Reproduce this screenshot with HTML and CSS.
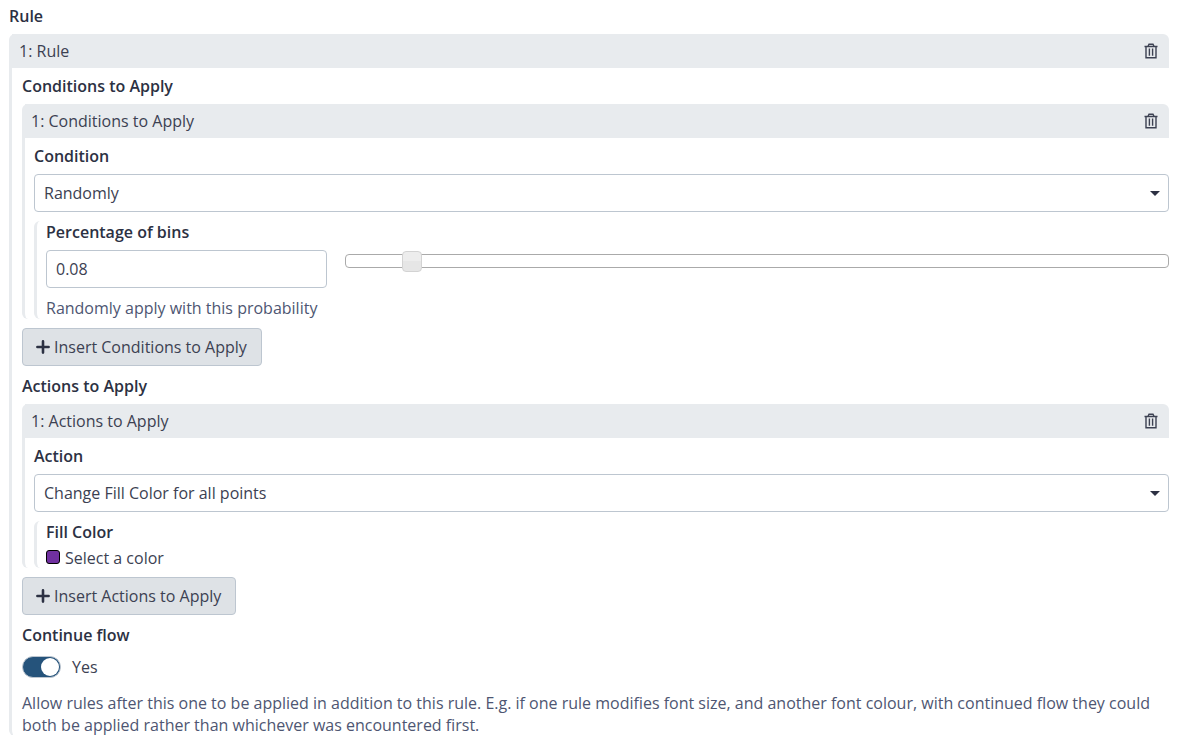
FILE: index.html
```
<!DOCTYPE html>
<html lang="en">
<head>
    <meta charset="UTF-8">
    <meta name="viewport" content="width=device-width, initial-scale=1.0">
    <title>Rule</title>
    <link rel="stylesheet" href="styles.css">
</head>
<body>

<!-- shared icons -->
<svg class="icon-defs" aria-hidden="true">
    <symbol id="icon-trash" viewBox="0 0 14 16">
        <path d="M0.5 3.5H13.5M4 3.2L5 1.2H9L10 3.2M2 3.5V14.8H12V3.5M5.4 5.5V12.8M8.6 5.5V12.8" fill="none" stroke="currentColor" stroke-width="1.4"/>
    </symbol>
    <symbol id="icon-plus" viewBox="0 0 14 14">
        <path d="M7 1.4V12.6M1.4 7H12.6" fill="none" stroke="currentColor" stroke-width="2.6" stroke-linecap="round"/>
    </symbol>
</svg>

<form class="tool-form">
    <h2 class="title">Rule</h2>
    <section class="block">
        <div class="block-header">
            <span>1: Rule</span>
            <button type="button" class="delete" aria-label="Delete rule"><svg><use href="#icon-trash"/></svg></button>
        </div>
        <div class="block-body">

            <!-- conditions -->
            <h3 class="title">Conditions to Apply</h3>
            <section class="block">
                <div class="block-header inner">
                    <span>1: Conditions to Apply</span>
                    <button type="button" class="delete" aria-label="Delete condition"><svg><use href="#icon-trash"/></svg></button>
                </div>
                <div class="block-body">
                    <label class="title" for="condition">Condition</label>
                    <div class="select-wrap">
                        <select id="condition">
                            <option>Randomly</option>
                        </select>
                    </div>
                    <div class="sub-block">
                        <label class="title" for="percentage">Percentage of bins</label>
                        <div class="slider-row">
                            <input type="text" id="percentage" class="number" value="0.08">
                            <div class="slider">
                                <input type="range" min="0" max="1" step="0.01" value="0.08" aria-label="Percentage of bins">
                            </div>
                        </div>
                        <p class="help">Randomly apply with this probability</p>
                    </div>
                </div>
            </section>
            <button type="button" class="insert"><svg><use href="#icon-plus"/></svg>Insert Conditions to Apply</button>

            <!-- actions -->
            <h3 class="title">Actions to Apply</h3>
            <section class="block">
                <div class="block-header inner">
                    <span>1: Actions to Apply</span>
                    <button type="button" class="delete" aria-label="Delete action"><svg><use href="#icon-trash"/></svg></button>
                </div>
                <div class="block-body">
                    <label class="title" for="action">Action</label>
                    <div class="select-wrap">
                        <select id="action">
                            <option>Change Fill Color for all points</option>
                        </select>
                    </div>
                    <div class="sub-block">
                        <h4 class="title">Fill Color</h4>
                        <button type="button" class="color-picker"><span class="swatch"></span>Select a color</button>
                    </div>
                </div>
            </section>
            <button type="button" class="insert"><svg><use href="#icon-plus"/></svg>Insert Actions to Apply</button>

            <!-- continue flow -->
            <h3 class="title">Continue flow</h3>
            <label class="switch">
                <input type="checkbox" checked>
                <span>Yes</span>
            </label>
            <p class="help">Allow rules after this one to be applied in addition to this rule. E.g. if one rule modifies font size, and another font colour, with continued flow they could both be applied rather than whichever was encountered first.</p>
        </div>
    </section>
</form>

</body>
</html>
```

FILE: styles.css
```
* {
    box-sizing: border-box;
}
body {
    margin: 0;
    background: #fff;
    color: #3c4152;
    font-family: "Open Sans", "Noto Sans", sans-serif;
    font-size: 16px;
    line-height: 22px;
}
button, input, select {
    font: inherit;
    color: inherit;
}
.icon-defs {
    display: none;
}
.tool-form {
    padding: 5px 22px 0 9px;
}
.title {
    display: block;
    margin: 0 0 7px;
    color: #2c3143;
    font-size: 16px;
    font-weight: 600;
}

/* repeat blocks */
.block {
    border-left: 3px solid #e8ebee;
    border-radius: 6px;
}
.block-header {
    display: flex;
    align-items: center;
    justify-content: space-between;
    height: 34px;
    padding: 0 11px 0 7px;
    background: #e8ebee;
    border-top-right-radius: 6px;
}
.block-header.inner {
    padding-left: 6px;
}
.block-body {
    padding: 7px 0 0 10px;
}
.block .block .block-body {
    padding-left: 9px;
}
.delete {
    display: flex;
    padding: 0;
    border: none;
    background: none;
    cursor: pointer;
}
.delete svg {
    width: 14px;
    height: 16px;
}
.sub-block {
    margin-top: 9px;
    padding-left: 9px;
    border-left: 3px solid #e8ebee;
    border-radius: 6px;
}

/* controls */
.select-wrap {
    display: grid;
    align-items: center;
}
.select-wrap select, .select-wrap::after {
    grid-area: 1 / 1;
}
.select-wrap::after {
    content: "";
    justify-self: end;
    margin-right: 9px;
    border: 5px solid transparent;
    border-top-color: #2c3143;
    border-bottom: none;
    pointer-events: none;
}
select, .number {
    width: 100%;
    height: 38px;
    padding: 0 9px 1px;
    border: 1px solid #bdc6d0;
    border-radius: 4px;
    background: #fff;
    appearance: none;
}
.slider-row {
    display: flex;
    align-items: flex-start;
    gap: 18px;
}
.number {
    flex: none;
    width: 25%;
}
.slider {
    flex: 1;
    display: flex;
    align-items: center;
    height: 14px;
    margin-top: 4px;
    border: 1px solid #aaa;
    border-radius: 4px;
}
.slider input {
    flex: 1;
    margin: 0 -10px;
    background: none;
    appearance: none;
}
.slider input::-webkit-slider-thumb {
    width: 20px;
    height: 21px;
    border: 1px solid #d3d3d3;
    border-radius: 4px;
    background: linear-gradient(#ededed 50%, #e6e6e6 50%);
    appearance: none;
}
.help {
    margin: 9px 0 0;
    color: #4e5672;
}
.insert {
    display: flex;
    align-items: center;
    gap: 4px;
    height: 38px;
    margin: 9px 0;
    padding: 0 14px 0 13px;
    border: 1px solid #bdc6d0;
    border-radius: 4px;
    background: #dee2e6;
    cursor: pointer;
}
.insert svg {
    width: 14px;
    height: 14px;
    color: #2c3143;
}
.color-picker {
    display: flex;
    gap: 5px;
    padding: 5px 0 0;
    border: none;
    background: none;
    line-height: 20px;
    cursor: pointer;
}
.sub-block h4.title {
    margin-bottom: 0;
}
.swatch {
    width: 14px;
    height: 14px;
    margin-top: 2px;
    border: 1px solid #000;
    border-radius: 3px;
    background: #7030a0;
}

/* switch */
.switch {
    display: flex;
    align-items: center;
    gap: 11px;
    margin-top: 10px;
}
.switch input {
    display: flex;
    width: 39px;
    height: 22px;
    margin: 0;
    padding: 1px;
    border: 1px solid #bdc6d0;
    border-radius: 11px;
    background: #25537b;
    appearance: none;
}
.switch input::before {
    content: "";
    width: 18px;
    height: 18px;
    border-radius: 50%;
    background: #fff;
}
.switch input:checked::before {
    margin-left: auto;
}
.switch + .help {
    margin-top: 14px;
}
```
